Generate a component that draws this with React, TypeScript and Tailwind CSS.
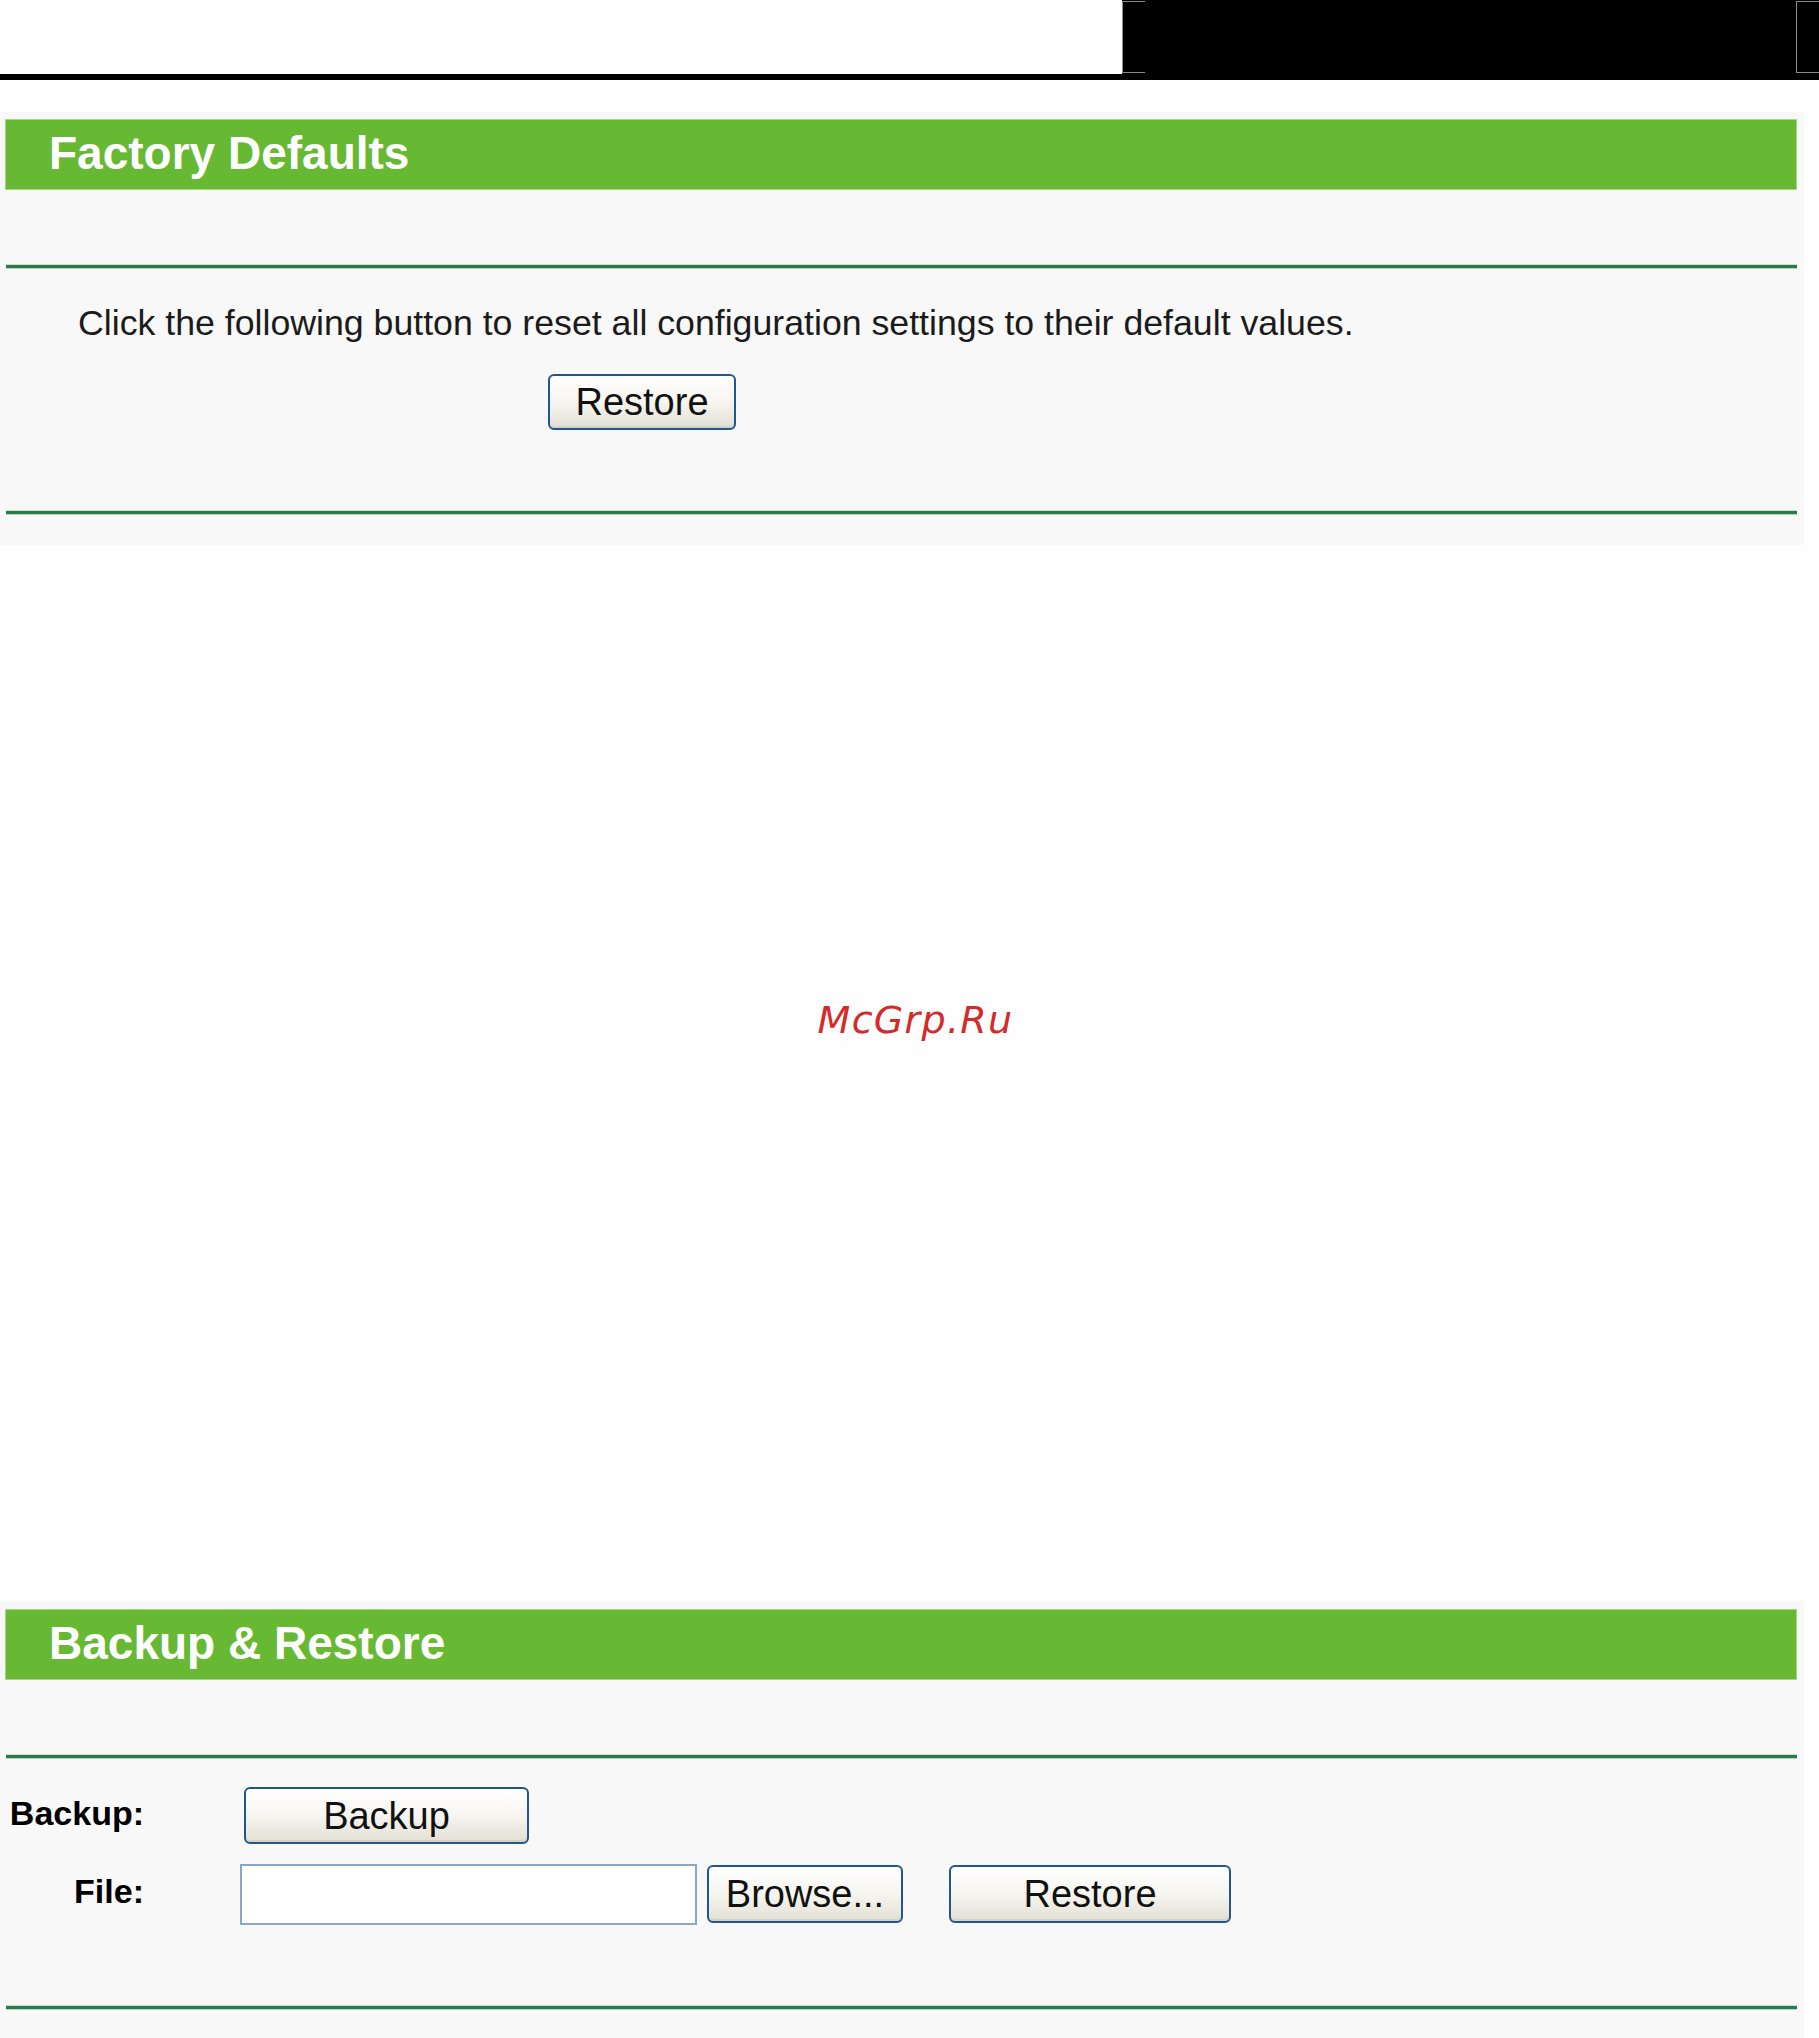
// Router admin page: Factory Defaults + Backup & Restore

function SectionHeader({ title }: { title: string }) {
  return (
    <div className="ml-[5px] box-border h-[71px] w-[1792px] border border-[#a3d685] bg-[#67b934] pt-[10px] pl-[43px]">
      <h2 className="text-[46px] leading-[46px] font-bold text-white">{title}</h2>
    </div>
  );
}

function Rule({ className = "" }: { className?: string }) {
  return (
    <div
      className={`ml-[6px] h-[3px] w-[1791px] bg-[#2c7a4c] shadow-[0_1px_0_#b4d6c0,0_-1px_0_#c7e0cf] ${className}`}
    />
  );
}

function XpButton({ label, className = "" }: { label: string; className?: string }) {
  return (
    <button
      type="button"
      className={`box-border flex items-center justify-center rounded-[6px] border-2 border-[#23568e] bg-linear-to-b from-white via-[#f6f5f0] to-[#e2e0d4] text-[38px] leading-none text-[#111] shadow-[inset_0_-2px_0_#d6d3c4] ${className}`}
    >
      {label}
    </button>
  );
}

export default function App() {
  return (
    <div className="min-h-[2038px] bg-[#fefefe] font-['Liberation_Sans',Arial,sans-serif]">
      {/* top strip */}
      <div className="flex h-[74px]">
        <div className="flex-1 bg-white" />
        <div className="flex w-[697px] justify-between bg-black py-px">
          <span className="w-[23px] border-y border-l border-[#8a8a8a]" />
          <span className="w-[23px] border-y border-l border-[#8a8a8a]" />
        </div>
      </div>
      <div className="h-[6px] bg-black" />

      {/* Factory Defaults */}
      <section className="mt-[32px] w-[1804px] bg-[#f8f8f8] pt-[7px] pb-[31px]">
        <SectionHeader title="Factory Defaults" />
        <Rule className="mt-[75px]" />
        <p className="mt-[37px] pl-[78px] text-[35.7px] leading-[36px] text-[#1b1b1b]">
          Click the following button to reset all configuration settings to their default values.
        </p>
        <XpButton label="Restore" className="mt-[33px] ml-[548px] h-[56px] w-[188px]" />
        <Rule className="mt-[81px]" />
      </section>

      {/* watermark */}
      <div className="flex justify-center pt-[456px] pb-[562px] pl-[12px]">
        <span className="font-['DejaVu_Sans',sans-serif] text-[38px] leading-[38px] tracking-[1.3px] text-[#d42a2a] italic">
          McGrp.Ru
        </span>
      </div>

      {/* Backup & Restore */}
      <section className="w-[1804px] bg-[#f8f8f8] pt-[8px] pb-[29px]">
        <SectionHeader title="Backup & Restore" />
        <Rule className="mt-[75px]" />

        <div className="mt-[29px] flex items-start">
          <span className="w-[144px] pt-[9px] text-right text-[34px] leading-[34px] font-bold text-black">
            Backup:
          </span>
          <XpButton label="Backup" className="ml-[100px] h-[57px] w-[285px]" />
        </div>

        <div className="mt-[20px] flex items-start">
          <span className="w-[144px] pt-[10px] text-right text-[34px] leading-[34px] font-bold text-black">
            File:
          </span>
          <input
            type="text"
            className="ml-[96px] box-border h-[61px] w-[457px] border-2 border-[#8ba7c6] bg-white outline-none"
          />
          <XpButton label="Browse..." className="mt-px ml-[10px] h-[58px] w-[196px]" />
          <XpButton label="Restore" className="mt-px ml-[46px] h-[58px] w-[282px]" />
        </div>

        <Rule className="mt-[81px]" />
      </section>
    </div>
  );
}
